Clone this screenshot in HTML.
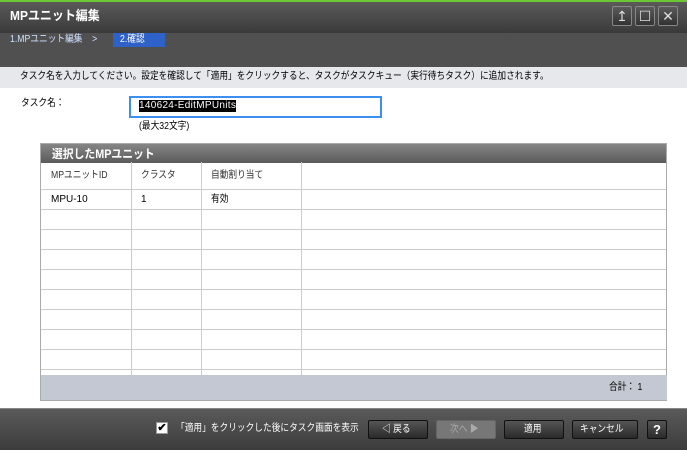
<!DOCTYPE html>
<html><head><meta charset="utf-8"><style>
*{margin:0;padding:0;box-sizing:border-box}
body{width:687px;height:450px;overflow:hidden;background:#fff;font-family:"Liberation Sans","Noto Sans CJK JP",sans-serif;font-size:10px;line-height:12px;color:#000;position:relative}
.abs{position:absolute;white-space:nowrap}
.n{display:inline-block;transform:scaleX(0.87);transform-origin:left center}
.title{left:0;top:0;width:687px;height:33px;background:linear-gradient(#5a5a5a,#3a3a3a);border-top:2px solid #6cc832}
.wb{top:6px;width:20px;height:20px;border:1px solid #888;background:linear-gradient(#5a5a5a,#333);color:#ddd;font-size:14px;text-align:center;line-height:18px;border-radius:2px}
.crumb{left:0;top:33px;width:687px;height:34px;background:#505050}
.band{left:0;top:67px;width:687px;height:21px;background:#e6e8ec}
.grid{left:41px;top:162px;width:626px;height:213px;overflow:hidden}
.btn{top:420px;height:19px;border:1px solid #111;border-radius:2px;background:linear-gradient(#555,#2a2a2a);color:#fff;text-align:center;line-height:17px;font-size:10px}
</style></head><body>
<div class="abs title"><span class="abs n" style="left:10px;top:6px;color:#fff;font-weight:bold;font-size:13px;line-height:16px;transform:scaleX(0.92)">MPユニット編集</span></div>
<div class="abs wb" style="left:612px">↥</div>
<div class="abs wb" style="left:635px">☐</div>
<div class="abs wb" style="left:658px">✕</div>
<div class="abs crumb">
 <span class="abs n" style="left:10px;top:1px;color:#cfe0ff">1.MPユニット編集 &nbsp;&nbsp; &gt;</span>
 <span class="abs" style="left:113px;top:0;width:52px;height:14px;background:#2f62c8"></span>
 <span class="abs n" style="left:120px;top:1px;color:#fff">2.確認</span>
</div>
<div class="abs band"><span class="abs n" style="left:20px;top:4px">タスク名を入力してください。設定を確認して「適用」をクリックすると、タスクがタスクキュー（実行待ちタスク）に追加されます。</span></div>
<div class="abs n" style="left:21px;top:98px">タスク名：</div>
<div class="abs" style="left:129px;top:96px;width:253px;height:22px;border:2px solid #3c8ef0"></div>
<span class="abs" style="left:139px;top:100px;background:#000;color:#fff;font-size:10px;letter-spacing:0.3px">140624-EditMPUnits</span>
<div class="abs n" style="left:139px;top:121px">(最大32文字)</div>
<div class="abs" style="left:40px;top:143px;width:627px;height:20px;background:linear-gradient(#888,#5a5a5a)"><span class="abs n" style="left:12px;top:4px;color:#fff;font-weight:bold;font-size:12px;line-height:14px;transform:scaleX(0.9)">選択したMPユニット</span></div>
<div class="abs grid">
<svg width="626" height="213" style="position:absolute;left:0;top:0">
<g stroke="#ccc" stroke-width="1">
<line x1="90.5" y1="0" x2="90.5" y2="213"/><line x1="160.5" y1="0" x2="160.5" y2="213"/><line x1="260.5" y1="0" x2="260.5" y2="213"/>
<line x1="0" y1="27.5" x2="626" y2="27.5"/>
<line x1="0" y1="47.5" x2="626" y2="47.5"/><line x1="0" y1="67.5" x2="626" y2="67.5"/><line x1="0" y1="87.5" x2="626" y2="87.5"/><line x1="0" y1="107.5" x2="626" y2="107.5"/><line x1="0" y1="127.5" x2="626" y2="127.5"/><line x1="0" y1="147.5" x2="626" y2="147.5"/><line x1="0" y1="167.5" x2="626" y2="167.5"/><line x1="0" y1="187.5" x2="626" y2="187.5"/><line x1="0" y1="207.5" x2="626" y2="207.5"/>
</g></svg>
<span class="abs n" style="left:10px;top:8px;color:#333">MPユニットID</span>
<span class="abs n" style="left:100px;top:8px;color:#333">クラスタ</span>
<span class="abs n" style="left:170px;top:8px;color:#333">自動割り当て</span>
<span class="abs" style="left:10px;top:32px">MPU-10</span>
<span class="abs" style="left:100px;top:32px">1</span>
<span class="abs n" style="left:170px;top:32px">有効</span>
</div>
<div class="abs" style="left:40px;top:143px;width:627px;height:258px;border:1px solid #aaa"></div>
<div class="abs" style="left:41px;top:375px;width:626px;height:25px;background:#c3c8d2"><span class="abs n" style="left:568px;top:7px">合計： 1</span></div>
<div class="abs" style="left:0;top:408px;width:687px;height:42px;background:linear-gradient(#5a5a5a,#3c3c3c);border-top:1px solid #888"></div>
<div class="abs" style="left:156px;top:422px;width:12px;height:12px;background:#fff;border:1px solid #999;font-size:11px;line-height:10px;text-align:center;font-weight:bold">✔</div>
<div class="abs n" style="left:176px;top:423px;color:#fff">「適用」をクリックした後にタスク画面を表示</div>
<div class="abs btn" style="left:368px;width:60px"><span class="n">◁ 戻る</span></div>
<div class="abs btn" style="left:436px;width:60px;background:#777;border-color:#666;color:#aaa"><span class="n">次へ ▶</span></div>
<div class="abs btn" style="left:504px;width:60px"><span class="n">適用</span></div>
<div class="abs btn" style="left:572px;width:66px"><span class="n">キャンセル</span></div>
<div class="abs btn" style="left:647px;width:20px;font-weight:bold;font-size:13px">?</div>
</body></html>
